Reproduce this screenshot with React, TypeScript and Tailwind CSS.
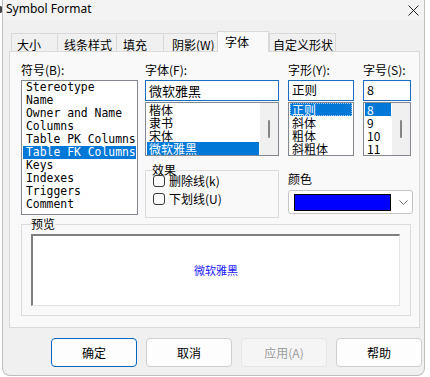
import React from "react";

const cjk = "font-['Noto_Sans_CJK_SC',sans-serif]";

const tabs = [
  { label: "大小", w: "w-[47px]", pl: "pl-[5px]" },
  { label: "线条样式", w: "w-[60px]", pl: "pl-[6px]" },
  { label: "填充", w: "w-[48px]", pl: "pl-[6px]" },
  { label: "阴影(W)", w: "w-[55px]", pl: "pl-[8px]" },
  { label: "字体", w: "w-[52px]", pl: "pl-[7px]", active: true },
  { label: "自定义形状", w: "w-[67px]", pl: "pl-[3px]" },
];

const symbols = [
  "Stereotype",
  "Name",
  "Owner and Name",
  "Columns",
  "Table PK Columns",
  "Table FK Columns",
  "Keys",
  "Indexes",
  "Triggers",
  "Comment",
];

function Scrollbar() {
  return (
    <div className="w-[18px] h-full bg-[#f0f0f0] flex justify-center">
      <div className="mt-[17px] w-[2px] h-[18px] rounded-full bg-[#858585]" />
    </div>
  );
}

function Checkbox({ label }: { label: string }) {
  return (
    <div className="h-[18px] flex items-center ml-[1px]">
      <div className="w-[12px] h-[12px] rounded-[3px] border border-[#3a3a3a] bg-[#fbfbfb]" />
      <span className="ml-[4px] text-[12px] leading-none">{label}</span>
    </div>
  );
}

function Button({ label, primary, disabled }: { label: string; primary?: boolean; disabled?: boolean }) {
  return (
    <div
      className={
        primary
          ? "w-[86px] h-[29px] rounded-[4px] border border-[#0067c0] bg-[#fdfdfd] flex items-center justify-center text-[12px] leading-none text-black"
          : disabled
          ? "w-[86px] h-[29px] rounded-[4px] border border-[#e5e5e5] bg-[#f5f5f5] flex items-center justify-center text-[12px] leading-none text-[#9d9d9d]"
          : "w-[86px] h-[29px] rounded-[4px] border border-[#d0d0d0] bg-[#fdfdfd] flex items-center justify-center text-[12px] leading-none text-black"
      }
    >
      {label}
    </div>
  );
}

export default function App() {
  return (
    <div className={`w-[430px] h-[377px] bg-white overflow-hidden relative text-black ${cjk}`}>
      <span className="absolute left-0 top-[6px] w-[2px] h-[7px] rounded-r-full border-2 border-l-0 border-[#444]" />
      <div className="ml-[2px] w-[423px] h-[376px] bg-[#f0f0f0] border-x border-b border-[#bdbdbd] rounded-b-[8px] flex flex-col">
        {/* title bar */}
        <div className="h-[20px] flex items-center pl-[3px] pr-[5px] bg-[#f3f3f3]">
          <span className="font-['Noto_Sans',sans-serif] text-[12px] leading-none pb-[2px]">Symbol Format</span>
          <svg className="ml-auto" width="11" height="11" viewBox="0 0 11 11">
            <path d="M0.5 0.5 L10.5 10.5 M10.5 0.5 L0.5 10.5" stroke="#1f1f1f" strokeWidth="1" />
          </svg>
        </div>

        {/* tabs */}
        <div className="h-[31px] flex items-end pl-[8px]">
          {tabs.map((t) =>
            t.active ? (
              <div
                key={t.label}
                className={`${t.w} ${t.pl} h-[21px] -mb-px relative z-10 bg-[#f9f9f9] border-x border-t border-[#d9d9d9] flex items-center text-[12px] leading-none`}
              >
                {t.label}
              </div>
            ) : (
              <div
                key={t.label}
                className={`${t.w} ${t.pl} h-[18px] pt-[4px] bg-[#f0f0f0] border-l border-t border-r border-[#d9d9d9] -mr-px flex items-center text-[12px] leading-none`}
              >
                {t.label}
              </div>
            )
          )}
        </div>

        {/* tab page */}
        <div className="ml-[6px] w-[411px] h-[277px] border border-[#d9d9d9] bg-[#f9f9f9] pl-[11px] pt-[11px] flex flex-col">
          <div className="h-[155px] flex">
            {/* symbol column */}
            <div className="w-[117px] flex flex-col">
              <div className="h-[14px] text-[12px] leading-[14px]">符号(B):</div>
              <div className="mt-[3px] h-[135px] border border-[#828790] bg-white overflow-hidden font-['DejaVu_Sans_Mono',monospace] text-[11.4px] whitespace-nowrap">
                {symbols.map((s, i) =>
                  i === 5 ? (
                    <div key={s} className="h-[13px] leading-[13px] mx-[1px] pl-[3px] bg-[#0078d7] text-white overflow-hidden">
                      {s}
                    </div>
                  ) : (
                    <div key={s} className="h-[13px] leading-[13px] mx-[1px] pl-[3px] overflow-hidden">
                      {s}
                    </div>
                  )
                )}
              </div>
            </div>

            {/* font column */}
            <div className="ml-[7px] w-[134px] flex flex-col">
              <div className="h-[14px] text-[12px] leading-[14px]">字体(F):</div>
              <div className="mt-[3px] h-[21px] border border-[#1c6fc0] bg-white pl-[3px] flex items-center text-[13px] leading-none">
                微软雅黑
              </div>
              <div className="mt-[1px] h-[54px] border border-[#828790] bg-white flex">
                <div className="flex-1 text-[12px]">
                  {["楷体", "隶书", "宋体"].map((f) => (
                    <div key={f} className="h-[13px] leading-[13px] mx-[1px] pl-[2px]">
                      {f}
                    </div>
                  ))}
                  <div className="h-[13px] leading-[13px] mx-[1px] pl-[2px] bg-[#0078d7] text-white">微软雅黑</div>
                </div>
                <Scrollbar />
              </div>
              <fieldset className="mt-[8px] flex-1 border border-[#dcdcdc] px-[6px]">
                <legend className="text-[12px] leading-[12px]">效果</legend>
                <div className="mt-[-4px]">
                  <Checkbox label="删除线(k)" />
                  <Checkbox label="下划线(U)" />
                </div>
              </fieldset>
            </div>

            {/* style / size / color */}
            <div className="ml-[9px] flex flex-col">
              <div className="flex">
                <div className="w-[66px] flex flex-col">
                  <div className="h-[14px] text-[12px] leading-[14px]">字形(Y):</div>
                  <div className="mt-[3px] h-[21px] border border-[#1c6fc0] bg-white pl-[3px] flex items-center text-[12.5px] leading-none">
                    正则
                  </div>
                  <div className="mt-[1px] h-[54px] border border-[#828790] bg-white text-[12px]">
                    <div className="h-[13px] leading-[11px] mx-[1px] pl-[1px] bg-[#0078d7] text-white border border-dotted border-[#9fc8ee]">
                      正则
                    </div>
                    {["斜体", "粗体", "斜粗体"].map((f) => (
                      <div key={f} className="h-[13px] leading-[13px] mx-[1px] pl-[2px]">
                        {f}
                      </div>
                    ))}
                  </div>
                </div>
                <div className="ml-[9px] w-[48px] flex flex-col">
                  <div className="h-[14px] text-[12px] leading-[14px]">字号(S):</div>
                  <div className="mt-[3px] h-[21px] border border-[#1c6fc0] bg-white pl-[3px] flex items-center text-[12.5px] leading-none">
                    8
                  </div>
                  <div className="mt-[1px] h-[54px] border border-[#828790] bg-white flex">
                    <div className="flex-1 text-[12px]">
                      <div className="h-[13px] leading-[13px] mx-[1px] pl-[2px] bg-[#0078d7] text-white">8</div>
                      {["9", "10", "11"].map((f) => (
                        <div key={f} className="h-[13px] leading-[13px] mx-[1px] pl-[2px]">
                          {f}
                        </div>
                      ))}
                    </div>
                    <Scrollbar />
                  </div>
                </div>
              </div>
              <div className="mt-[16px] h-[14px] text-[12px] leading-[14px]">颜色</div>
              <div className="mt-[4px] w-[125px] h-[24px] rounded-[3px] border border-[#c4c4c4] bg-white pl-[5px] pt-[3px] flex items-start">
                <div className="w-[97px] h-[17px] border border-black bg-[#0000ff]" />
                <svg className="ml-[8px] mt-[6px]" width="9" height="5" viewBox="0 0 9 5">
                  <path d="M0.5 0.5 L4.5 4.5 L8.5 0.5" fill="none" stroke="#6b6b6b" strokeWidth="1" />
                </svg>
              </div>
            </div>
          </div>

          {/* preview */}
          <fieldset className="w-[390px] h-[98px] border border-[#dcdcdc] pl-[9px] pr-[10px]">
            <legend className="text-[12px] leading-[12px]">预览</legend>
            <div className="mt-[4px] h-[72px] border-t-2 border-l-2 border-[#7f7f7f] border-b border-r border-b-[#e3e3e3] border-r-[#e3e3e3] bg-white flex items-center justify-center">
              <span className="text-[11px] leading-none text-[#1a1aff]">微软雅黑</span>
            </div>
          </fieldset>
        </div>

        {/* buttons */}
        <div className="mt-[10px] flex justify-end gap-[9px] pr-[2px]">
          <Button label="确定" primary />
          <Button label="取消" />
          <Button label="应用(A)" disabled />
          <Button label="帮助" />
        </div>
      </div>
    </div>
  );
}
